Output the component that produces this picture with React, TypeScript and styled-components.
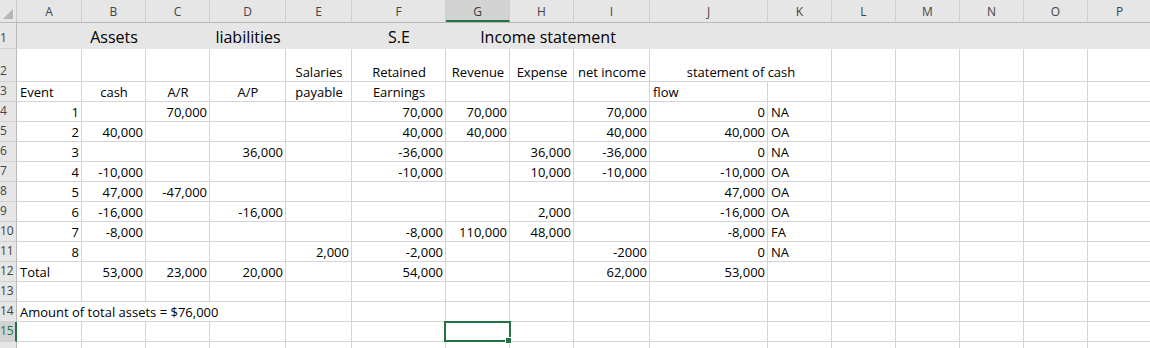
import React from "react";
import styled, { createGlobalStyle, css } from "styled-components";

type Align = "left" | "center" | "right";
type CellDef = { text: string; align?: Align; span?: number };
type RowDef = {
  n: number;
  h: number;
  band?: boolean;
  big?: boolean;
  hideNum?: boolean;
  cells: Record<string, CellDef>;
};

const COLS: { id: string; w: number }[] = [
  { id: "A", w: 65 },
  { id: "B", w: 64 },
  { id: "C", w: 64 },
  { id: "D", w: 76 },
  { id: "E", w: 66 },
  { id: "F", w: 94 },
  { id: "G", w: 64 },
  { id: "H", w: 64 },
  { id: "I", w: 76 },
  { id: "J", w: 118 },
  { id: "K", w: 64 },
  { id: "L", w: 64 },
  { id: "M", w: 64 },
  { id: "N", w: 64 },
  { id: "O", w: 64 },
  { id: "P", w: 64 },
];

const HEADER_W = 17;
const TEMPLATE = `${HEADER_W}px ` + COLS.map((c) => `${c.w}px`).join(" ");
const SEL_COL = "G";
const SEL_ROW = 15;

const r = (text: string): CellDef => ({ text, align: "right" });
const l = (text: string, span?: number): CellDef => ({ text, align: "left", span });
const c = (text: string, span?: number): CellDef => ({ text, align: "center", span });

const ROWS: RowDef[] = [
  {
    n: 1,
    h: 26,
    band: true,
    big: true,
    cells: {
      B: c("Assets"),
      D: c("liabilities"),
      F: c("S.E"),
      G: c("Income statement", 3),
    },
  },
  {
    n: 2,
    h: 33,
    cells: {
      E: c("Salaries"),
      F: c("Retained"),
      G: c("Revenue"),
      H: c("Expense"),
      I: c("net income"),
      J: c("statement of cash", 2),
    },
  },
  {
    n: 3,
    h: 20,
    cells: {
      A: l("Event"),
      B: c("cash"),
      C: c("A/R"),
      D: c("A/P"),
      E: c("payable"),
      F: c("Earnings"),
      J: l("flow"),
    },
  },
  {
    n: 4,
    h: 20,
    cells: { A: r("1"), C: r("70,000"), F: r("70,000"), G: r("70,000"), I: r("70,000"), J: r("0"), K: l("NA") },
  },
  {
    n: 5,
    h: 20,
    cells: { A: r("2"), B: r("40,000"), F: r("40,000"), G: r("40,000"), I: r("40,000"), J: r("40,000"), K: l("OA") },
  },
  {
    n: 6,
    h: 20,
    cells: { A: r("3"), D: r("36,000"), F: r("-36,000"), H: r("36,000"), I: r("-36,000"), J: r("0"), K: l("NA") },
  },
  {
    n: 7,
    h: 20,
    cells: { A: r("4"), B: r("-10,000"), F: r("-10,000"), H: r("10,000"), I: r("-10,000"), J: r("-10,000"), K: l("OA") },
  },
  {
    n: 8,
    h: 20,
    cells: { A: r("5"), B: r("47,000"), C: r("-47,000"), J: r("47,000"), K: l("OA") },
  },
  {
    n: 9,
    h: 20,
    cells: { A: r("6"), B: r("-16,000"), D: r("-16,000"), H: r("2,000"), J: r("-16,000"), K: l("OA") },
  },
  {
    n: 10,
    h: 20,
    cells: { A: r("7"), B: r("-8,000"), F: r("-8,000"), G: r("110,000"), H: r("48,000"), J: r("-8,000"), K: l("FA") },
  },
  {
    n: 11,
    h: 20,
    cells: { A: r("8"), E: r("2,000"), F: r("-2,000"), I: r("-2000"), J: r("0"), K: l("NA") },
  },
  {
    n: 12,
    h: 20,
    cells: { A: l("Total"), B: r("53,000"), C: r("23,000"), D: r("20,000"), F: r("54,000"), I: r("62,000"), J: r("53,000") },
  },
  { n: 13, h: 20, cells: {} },
  { n: 14, h: 20, cells: { A: l("Amount of total assets = $76,000", 4) } },
  { n: 15, h: 20, cells: {} },
  // only a sliver of row 16 shows at the bottom edge, its number is below the fold
  { n: 16, h: 20, hideNum: true, cells: {} },
];

const GlobalStyle = createGlobalStyle`
  html, body {
    margin: 0;
    padding: 0;
    background: #ffffff;
    overflow: hidden;
  }
  body {
    font-family: "Open Sans", "Liberation Sans", sans-serif;
  }
`;

const Sheet = styled.div`
  width: 1150px;
  height: 348px;
  overflow: hidden;
  background: #ffffff;
  color: #000000;
`;

const Row = styled.div<{ $h: number }>`
  display: grid;
  grid-template-columns: ${TEMPLATE};
  height: ${(p) => p.$h}px;
`;

const ColHeaders = styled.div`
  display: grid;
  grid-template-columns: ${TEMPLATE};
  height: 23px;
  background: #e6e6e6;
  border-bottom: 1px solid #b9b9b9;
  box-sizing: border-box;
`;

const Corner = styled.div`
  position: relative;
  border-right: 1px solid #c9c9c9;
  svg {
    position: absolute;
    left: 2px;
    top: 8px;
  }
`;

const ColLetter = styled.div<{ $active?: boolean }>`
  display: flex;
  align-items: center;
  justify-content: center;
  font-size: 12px;
  color: #444444;
  border-right: 1px solid #cfcfcf;
  box-sizing: border-box;
  ${(p) =>
    p.$active &&
    css`
      background: #d3d3d3;
      color: #3c3c3c;
      border-bottom: 2px solid #217346;
      padding-top: 2px;
    `}
`;

const RowNum = styled.div<{ $active?: boolean }>`
  display: flex;
  align-items: flex-end;
  padding: 0 0 2px 0;
  font-size: 12px;
  line-height: 16px;
  color: #444444;
  background: #e6e6e6;
  border-right: 1px solid #b9b9b9;
  border-bottom: 1px solid #d0d0d0;
  box-sizing: border-box;
  overflow: hidden;
  white-space: nowrap;
  ${(p) =>
    p.$active &&
    css`
      background: #d3d3d3;
      color: #217346;
      border-right: 2px solid #217346;
    `}
`;

const Cell = styled.div<{ $align: Align; $span: number; $band?: boolean; $big?: boolean }>`
  grid-column: span ${(p) => p.$span};
  display: flex;
  align-items: flex-end;
  justify-content: ${(p) =>
    p.$align === "right" ? "flex-end" : p.$align === "center" ? "center" : "flex-start"};
  padding: ${(p) => (p.$big ? "0 3px 1px 3px" : "0 2px 0 3px")};
  box-sizing: border-box;
  white-space: nowrap;
  font-size: ${(p) => (p.$big ? "16px" : "13px")};
  line-height: ${(p) => (p.$big ? "22px" : "17px")};
  ${(p) =>
    p.$band
      ? css`
          background: #e7e6e6;
        `
      : css`
          border-right: 1px solid #d4d4d4;
          border-bottom: 1px solid #d4d4d4;
        `}
`;

const SelectedCell = styled(Cell)`
  position: relative;
  z-index: 1;
  &::after {
    content: "";
    position: absolute;
    left: -2px;
    right: -2px;
    top: -1px;
    bottom: -1px;
    border: 2px solid #217346;
  }
  &::before {
    content: "";
    position: absolute;
    right: -3px;
    bottom: -3px;
    width: 5px;
    height: 5px;
    background: #217346;
    border: 1px solid #ffffff;
    z-index: 2;
  }
`;

const SheetRow = ({ row }: { row: RowDef }) => {
  const out: React.ReactNode[] = [];
  let skip = 0;
  COLS.forEach((col) => {
    if (skip > 0) {
      skip--;
      return;
    }
    const def = row.cells[col.id];
    const span = def?.span ?? 1;
    skip = span - 1;
    const selected = row.n === SEL_ROW && col.id === SEL_COL;
    const Comp = selected ? SelectedCell : Cell;
    out.push(
      <Comp
        key={col.id}
        $align={def?.align ?? "left"}
        $span={span}
        $band={row.band}
        $big={row.big}
      >
        {def?.text}
      </Comp>
    );
  });
  return (
    <Row $h={row.h}>
      <RowNum $active={row.n === SEL_ROW}>{row.hideNum ? null : row.n}</RowNum>
      {out}
    </Row>
  );
};

export default function App() {
  return (
    <>
      <GlobalStyle />
      <Sheet>
        <ColHeaders>
          <Corner>
            <svg width="12" height="12" viewBox="0 0 12 12">
              <polygon points="11,1 11,11 1,11" fill="#b5b5b5" />
            </svg>
          </Corner>
          {COLS.map((col) => (
            <ColLetter key={col.id} $active={col.id === SEL_COL}>
              {col.id}
            </ColLetter>
          ))}
        </ColHeaders>
        {ROWS.map((row) => (
          <SheetRow key={row.n} row={row} />
        ))}
      </Sheet>
    </>
  );
}
